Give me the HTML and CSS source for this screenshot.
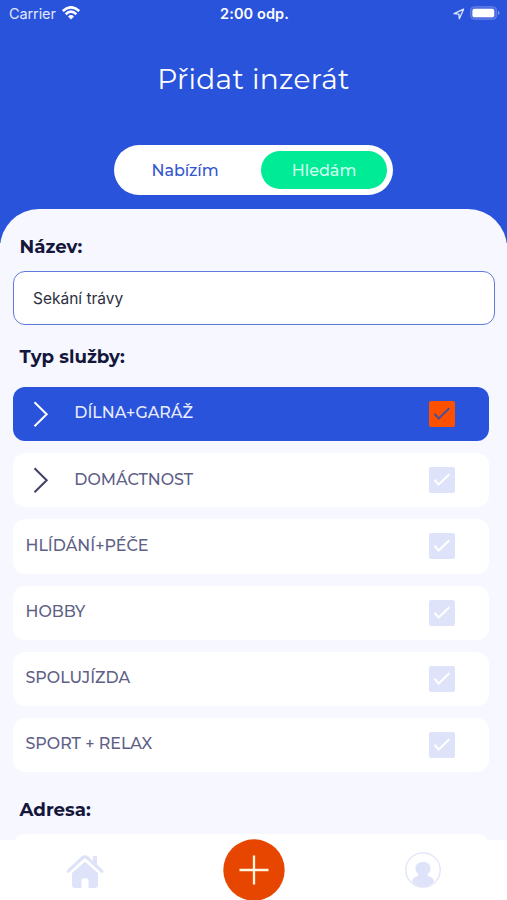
FILE: index.html
```html
<!DOCTYPE html>
<html lang="cs">
<head>
<meta charset="utf-8">
<title>Přidat inzerát</title>
<link rel="stylesheet" href="styles.css">
</head>
<body>
<svg class="defs" aria-hidden="true">
  <symbol id="check" viewBox="0 0 26 26"><path d="M5.5 12.8 9.7 17.6 20.3 7.3" fill="none" stroke="currentColor" stroke-width="2.1"/></symbol>
  <symbol id="chevron" viewBox="0 0 16 28"><path d="M1.5 2.3 13.7 14.3 1.5 26.3" fill="none" stroke="currentColor" stroke-width="2"/></symbol>
</svg>
<div class="screen">
  <header class="header">
    <div class="status">
      <div class="carrier"><span class="carrier-name">Carrier</span>
        <svg class="wifi" viewBox="0 0 18 14"><g fill="none" stroke="#fff" stroke-width="2.6"><path d="M.8 5.1Q9-2.5 17.2 5.1"/><path d="M3.7 8.2Q9 3.2 14.3 8.2"/></g><path d="M6 10.4Q9 7.7 12 10.4L9 13.6Z" fill="#fff"/></svg>
      </div>
      <div class="clock">2:00 odp.</div>
      <div class="indicators">
        <svg class="location" viewBox="0 0 12 12"><path d="M1 5.7 10.6 1.2 6.3 10.7 5.9 6.1Z" fill="none" stroke="#dfe6ff" stroke-width="1.3" stroke-linejoin="round"/></svg>
        <svg class="battery" viewBox="0 0 31 14"><rect x=".5" y=".5" width="27" height="13" rx="4" fill="#4c6de2" stroke="#6681e7"/><rect x="2.5" y="2.5" width="22.5" height="9" rx="2.3" fill="#fff"/><path d="M29 5q1.5.6 1.5 2T29 9Z" fill="#8ea3ef"/></svg>
      </div>
    </div>
    <h1 class="title">Přidat inzerát</h1>
    <div class="toggle">
      <div class="option offer"><span>Nabízím</span></div>
      <div class="option seek"><span>Hledám</span></div>
    </div>
  </header>
  <main class="sheet">
    <h2 class="label name-label"><span>Název:</span></h2>
    <div class="field"><span>Sekání trávy</span></div>
    <h2 class="label type-label"><span>Typ služby:</span></h2>
    <div class="list">
      <div class="row active"><svg class="chevron"><use href="#chevron"/></svg><span>DÍLNA+GARÁŽ</span><svg class="check"><use href="#check"/></svg></div>
      <div class="row"><svg class="chevron"><use href="#chevron"/></svg><span>DOMÁCTNOST</span><svg class="check"><use href="#check"/></svg></div>
      <div class="row"><span>HLÍDÁNÍ+PÉČE</span><svg class="check"><use href="#check"/></svg></div>
      <div class="row"><span>HOBBY</span><svg class="check"><use href="#check"/></svg></div>
      <div class="row"><span>SPOLUJÍZDA</span><svg class="check"><use href="#check"/></svg></div>
      <div class="row"><span>SPORT + RELAX</span><svg class="check"><use href="#check"/></svg></div>
    </div>
    <h2 class="label address-label"><span>Adresa:</span></h2>
    <div class="address"></div>
  </main>
  <nav class="tabs">
    <svg class="home" viewBox="0 0 38 36"><path d="M2.2 18.2 16.6 4.8q2.4-2 4.8 0L35.8 18.2" fill="none" stroke="currentColor" stroke-width="3.2" stroke-linecap="round"/><path d="M27 3h4v10l-4-4Z" fill="currentColor"/><path d="M6 20 19 8.8 32 20v12q0 3-3 3h-6.5v-8q0-1.5-1.5-1.5h-4q-1.5 0-1.5 1.5v8H9q-3 0-3-3Z" fill="currentColor"/></svg>
    <svg class="add" viewBox="0 0 62 62"><circle cx="31" cy="31" r="30.7" fill="#e64600"/><path d="M31 16.5v29M16.5 31h29" stroke="#fff4df" stroke-width="2.3"/></svg>
    <svg class="profile" viewBox="0 0 36 36"><circle cx="18" cy="18" r="17.2" fill="none" stroke="currentColor" stroke-width="1.2"/><path d="M18 10c5 0 7.500 2.500 7.500 6.500 0 3-1.500 4-3 6 0 2.500 5.500 1.500 6.700 7A16 16 0 0 1 18 35 16 16 0 0 1 6.800 29.500c1.200-5.500 6.700-4.500 6.700-7-1.500-2-3-3-3-6C10.500 12.500 13 10 18 10Z" fill="currentColor"/></svg>
  </nav>
</div>
</body>
</html>
```
FILE: styles.css
```css
* { box-sizing: border-box; }
body { margin: 0; font-family: Montserrat, Inter, "Noto Sans", sans-serif; }
.defs { position: absolute; width: 0; height: 0; }
svg { display: block; flex: none; }
h1, h2 { margin: 0; }
.screen { width: 507px; height: 900px; overflow: hidden; background: #f6f7ff; display: flex; flex-direction: column; }
.header { height: 243px; flex: none; background: #2a53dc; color: #fff; }
.status { height: 28px; padding: 0 7px 0 9px; display: grid; grid-template-columns: 1fr auto 1fr; align-items: center; font-family: Inter, sans-serif; }
.carrier { display: flex; align-items: center; gap: 6px; font-size: 14.5px; color: #e1e8ff; }
.carrier-name { letter-spacing: -.1px; margin-top: -1px; }
.wifi { width: 18px; height: 14px; margin-top: -2px; }
.clock { font-size: 14.5px; font-weight: 600; letter-spacing: .1px; margin-top: -1px; }
.indicators { display: flex; justify-content: flex-end; align-items: center; gap: 6px; }
.location { width: 12px; height: 12px; margin-right: -1px; }
.battery { width: 30px; height: 14px; margin-top: -2px; }
.title { height: 100px; line-height: 103px; text-align: center; font-size: 28px; font-weight: 400; letter-spacing: .35px; }
.toggle { width: 279px; height: 50px; margin: 17px 0 0 114px; padding: 6px; border-radius: 25px; background: #fff; display: flex; }
.option { display: flex; align-items: center; justify-content: center; font-size: 16px; font-weight: 500; }
.offer { width: 141px; padding-right: 11px; color: #3457cf; letter-spacing: -.1px; }
.seek { width: 126px; height: 38px; border-radius: 19px; background: #00eb96; color: #cffff0; }
.sheet { flex: none; height: 632px; margin-top: -34.5px; padding: 0 13px; border-radius: 39px 39px 0 0; background: #f6f7ff; overflow: hidden; }
.label { display: flex; align-items: center; padding-left: 6.5px; color: #14163b; font-size: 18.2px; font-weight: 700; }
.name-label { height: 62.5px; padding-top: 13px; }
.field { width: 482px; height: 54px; padding-left: 19px; border: 1.4px solid #5e7add; border-radius: 12px; background: #fff; display: flex; align-items: center; font: 15.5px Inter, sans-serif; color: #2d3040; }
.type-label { height: 62px; }
.list { display: grid; grid-auto-rows: 54.2px; gap: 12px; width: 476px; }
.row { display: flex; align-items: center; padding: 0 34px 0 12.5px; border-radius: 12px; background: #fff; color: #5e6085; font-size: 15.9px; font-weight: 500; }
.row span { margin-top: -2.4px; }
.row .chevron { width: 16px; height: 28px; margin: 0 25.3px 0 7.5px; color: #3f4068; }
.check { width: 26px; height: 26px; margin-left: auto; border-radius: 2px; background: #dfe3f9; color: #fff; }
.row.active { background: #2a53dc; color: #e7edff; }
.row.active span { margin-top: -3.5px; }
.row.active .chevron { color: #fff; }
.active .check { background: #ff5000; color: #4b4f9e; }
.address-label { height: 61.5px; padding-top: 12.5px; }
.address { width: 476px; height: 54px; border-radius: 12px; background: #fff; }
.tabs { position: relative; flex: none; height: 60px; margin-top: -.5px; background: #fff; display: flex; color: #dfe3f9; }
.home { width: 38px; height: 36px; margin: 12.5px 0 0 66px; }
.add { width: 62px; height: 62px; margin: -1px 0 0 119px; }
.profile { width: 36px; height: 36px; margin: 12px 0 0 119.5px; }
```
